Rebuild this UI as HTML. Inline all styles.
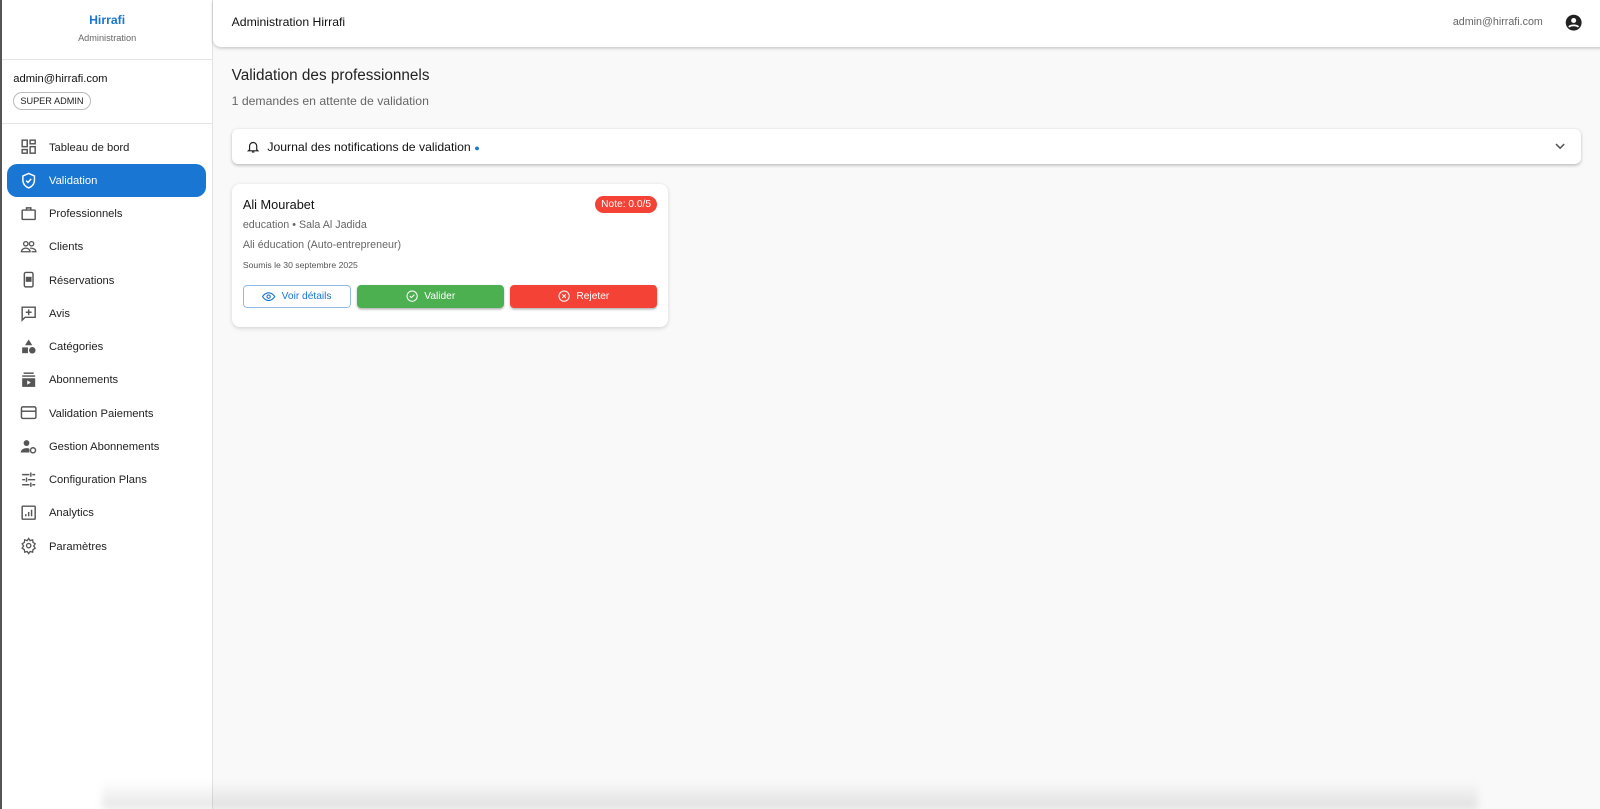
<!DOCTYPE html>
<html><head><meta charset="utf-8"><style>
*{box-sizing:border-box;margin:0;padding:0}
html,body{width:1600px;height:809px;overflow:hidden}
body{font-family:"Liberation Sans",Arial,sans-serif;background:#f9f9f9;color:#222}
#w{position:relative;width:1568px;height:793px;zoom:1.0204}
.sb{position:absolute;left:0;top:0;width:209px;height:793px;background:#fff;border-right:1px solid #e2e2e2;border-left:2px solid #555}
.brand{height:59px;border-bottom:1px solid #e4e4e4;text-align:center}
.brand .t{color:#1976d2;font-size:12px;font-weight:bold;padding-top:13px}
.brand .s{color:#666;font-size:9px;margin-top:6px}
.user{height:63px;border-bottom:1px solid #e4e4e4;padding:13px 0 0 11px}
.user .e{font-size:11px;color:#111}
.chip{display:inline-block;margin-top:6px;border:1px solid #bbb;border-radius:9px;font-size:9px;padding:3px 6px;color:#222}
.nav{position:absolute;top:128px;left:0;width:207px}
.it{position:relative;height:32.6px;display:flex;align-items:center;padding-left:46px;font-size:11px;color:#222;padding-top:1px}
.it svg{position:absolute;left:18px;top:7.5px;width:17px;height:17px}
.it.act{background:#1976d2;color:#fff;margin:0 7px 0 5px;border-radius:10px;padding-left:41px}
.it.act svg{left:13px}
.top{position:absolute;left:209px;top:0;width:1389px;height:46px;background:#fff;border-radius:0 0 8px 8px;box-shadow:0 1px 3px rgba(0,0,0,.2)}
.top .t{position:absolute;left:18px;top:15px;font-size:12px;color:#111}
.top .e{position:absolute;right:86px;top:16px;font-size:10.5px;color:#666}
.main h1{position:absolute;left:227px;top:66px;font-size:15px;font-weight:normal;color:#222}
.sub{position:absolute;left:227px;top:92px;font-size:12px;color:#666}
.acc{position:absolute;left:227px;top:126px;width:1322px;height:35px;background:#fff;border-radius:6px;box-shadow:0 1px 3px rgba(0,0,0,.25)}
.acc .t{position:absolute;left:35px;top:11px;font-size:12px;color:#111}
.card{position:absolute;left:227px;top:180px;width:428px;height:140px;background:#fff;border-radius:8px;box-shadow:0 1px 4px rgba(0,0,0,.15)}
.btn{position:absolute;top:99px;height:23px;border-radius:4px;font-size:10px;display:flex;align-items:center;justify-content:center;gap:6px;line-height:1}
.btn span{position:relative;top:1px}
</style></head><body><div id="w">
<div class="sb">
<div class="brand"><div class="t">Hirrafi</div><div class="s">Administration</div></div>
<div class="user"><div class="e">admin@hirrafi.com</div><div class="chip">SUPER ADMIN</div></div>
<div class="nav">
<div class="it"><svg viewBox="0 0 24 24" fill="none" stroke="#555" stroke-width="2"><rect x="3" y="3" width="7" height="9"/><rect x="14" y="3" width="7" height="5"/><rect x="14" y="12" width="7" height="9"/><rect x="3" y="16" width="7" height="5"/></svg>Tableau de bord</div>
<div class="it act"><svg viewBox="0 0 24 24" fill="none" stroke="#fff" stroke-width="2"><path d="M12 2l8 3.5v6c0 5-3.5 9-8 10.5C7.5 20.5 4 16.5 4 11.5v-6z"/><path d="M8.5 12l2.5 2.5 4.5-5"/></svg>Validation</div>
<div class="it"><svg viewBox="0 0 24 24" fill="none" stroke="#555" stroke-width="2"><rect x="3" y="7" width="18" height="13" rx="1"/><path d="M9 7V4h6v3"/></svg>Professionnels</div>
<div class="it"><svg viewBox="0 0 24 24" fill="none" stroke="#555" stroke-width="1.8"><circle cx="8" cy="8" r="3"/><circle cx="16" cy="8" r="3"/><path d="M2 19c0-3 3-5 6-5s6 2 6 5zM14 14c3 0 8 1 8 5h-6"/></svg>Clients</div>
<div class="it"><svg viewBox="0 0 24 24" fill="none" stroke="#555" stroke-width="2"><rect x="6" y="2" width="12" height="20" rx="2"/><rect x="9" y="9" width="6" height="5" fill="#555"/></svg>Réservations</div>
<div class="it"><svg viewBox="0 0 24 24" fill="none" stroke="#555" stroke-width="2"><path d="M3 3h18v14H7l-4 4z"/><path d="M12 6v8M8 10h8"/></svg>Avis</div>
<div class="it"><svg viewBox="0 0 24 24" fill="#555"><path d="M12 2l5 8H7z"/><rect x="3" y="13" width="8" height="8"/><circle cx="17" cy="17" r="4.5"/></svg>Catégories</div>
<div class="it"><svg viewBox="0 0 24 24" fill="#555"><rect x="5" y="2" width="14" height="2"/><rect x="3" y="6" width="18" height="2"/><path d="M3 10h18v12H3z"/><path d="M10 13l5 3-5 3z" fill="#fff"/></svg>Abonnements</div>
<div class="it"><svg viewBox="0 0 24 24" fill="none" stroke="#555" stroke-width="2"><rect x="2" y="4" width="20" height="16" rx="2"/><path d="M2 10h20"/></svg>Validation Paiements</div>
<div class="it"><svg viewBox="0 0 24 24" fill="#555"><circle cx="9" cy="7" r="4"/><path d="M1 20c0-4 4-6 8-6 2 0 3 .3 4 .8V20z"/><circle cx="18" cy="17" r="3.5" fill="none" stroke="#555" stroke-width="2"/></svg>Gestion Abonnements</div>
<div class="it"><svg viewBox="0 0 24 24" fill="none" stroke="#555" stroke-width="2"><path d="M3 5h10M17 5h4M15 2v6M3 12h4M11 12h10M9 9v6M3 19h10M17 19h4M15 16v6"/></svg>Configuration Plans</div>
<div class="it"><svg viewBox="0 0 24 24" fill="none" stroke="#555" stroke-width="2"><rect x="3" y="3" width="18" height="18" rx="1"/><path d="M8 17v-3M12 17v-6M16 17V8"/></svg>Analytics</div>
<div class="it"><svg viewBox="0 0 24 24" fill="none" stroke="#555" stroke-width="1.8"><circle cx="12" cy="12" r="3"/><path d="M12 2l2 3 3.5-1 .5 3.5 3 2-2 3 2 3-3 2-.5 3.5-3.5-1-2 3-2-3-3.5 1-.5-3.5-3-2 2-3-2-3 3-2L6.5 4 10 5z"/></svg>Paramètres</div>
</div>
</div>
<div class="top"><div class="t">Administration Hirrafi</div><div class="e">admin@hirrafi.com</div>
<svg style="position:absolute;right:47px;top:14px" width="17" height="17" viewBox="0 0 24 24"><circle cx="12" cy="12" r="11" fill="#222"/><circle cx="12" cy="9" r="3.5" fill="#fff"/><path d="M5.5 18c2-3 11-3 13 0" stroke="#fff" stroke-width="2.5" fill="none"/></svg></div>
<div class="main"><h1>Validation des professionnels</h1><div class="sub">1 demandes en attente de validation</div></div>
<div class="acc"><svg style="position:absolute;left:14px;top:10px" width="14" height="15" viewBox="0 0 24 24" fill="none" stroke="#222" stroke-width="2"><path d="M6 17V11a6 6 0 0112 0v6l2 2H4z"/><path d="M10 21h4"/></svg><div class="t">Journal des notifications de validation <span style="color:#1976d2;font-size:9px">●</span></div>
<svg style="position:absolute;right:14px;top:12px" width="12" height="10" viewBox="0 0 12 10" fill="none" stroke="#555" stroke-width="1.5"><path d="M2 3l4 4 4-4"/></svg></div>
<div class="card">
<div style="position:absolute;left:11px;top:13px;font-size:12.5px;color:#111">Ali Mourabet</div>
<div style="position:absolute;right:11px;top:12px;background:#f44336;color:#fff;font-size:10px;padding:3px 6px;border-radius:9px">Note: 0.0/5</div>
<div style="position:absolute;left:11px;top:35px;font-size:10.5px;color:#666">education • Sala Al Jadida</div>
<div style="position:absolute;left:11px;top:54px;font-size:10.5px;color:#666">Ali éducation (Auto-entrepreneur)</div>
<div style="position:absolute;left:11px;top:75px;font-size:8.5px;color:#555">Soumis le 30 septembre 2025</div>
<div class="btn" style="left:11px;width:106px;border:1px solid #90b8e8;color:#1976d2"><svg width="13" height="13" viewBox="0 0 24 24" fill="none" stroke="#1976d2" stroke-width="2"><path d="M1 12s4-7 11-7 11 7 11 7-4 7-11 7S1 12 1 12z"/><circle cx="12" cy="12" r="3"/></svg><span>Voir détails</span></div>
<div class="btn" style="left:123px;width:144px;background:#4caf50;color:#fff;box-shadow:0 1px 2px rgba(0,0,0,.3)"><svg width="12" height="12" viewBox="0 0 24 24" fill="none" stroke="#fff" stroke-width="2"><circle cx="12" cy="12" r="10"/><path d="M7.5 12l3 3 6-6"/></svg><span>Valider</span></div>
<div class="btn" style="left:273px;width:144px;background:#f44336;color:#fff;box-shadow:0 1px 2px rgba(0,0,0,.3)"><svg width="12" height="12" viewBox="0 0 24 24" fill="none" stroke="#fff" stroke-width="2"><circle cx="12" cy="12" r="10"/><path d="M8.5 8.5l7 7M15.5 8.5l-7 7"/></svg><span>Rejeter</span></div>
</div>
<div style="position:absolute;left:100px;right:120px;top:765px;height:28px;background:linear-gradient(rgba(0,0,0,0),rgba(0,0,0,.1));filter:blur(4px)"></div>
</div></body></html>
